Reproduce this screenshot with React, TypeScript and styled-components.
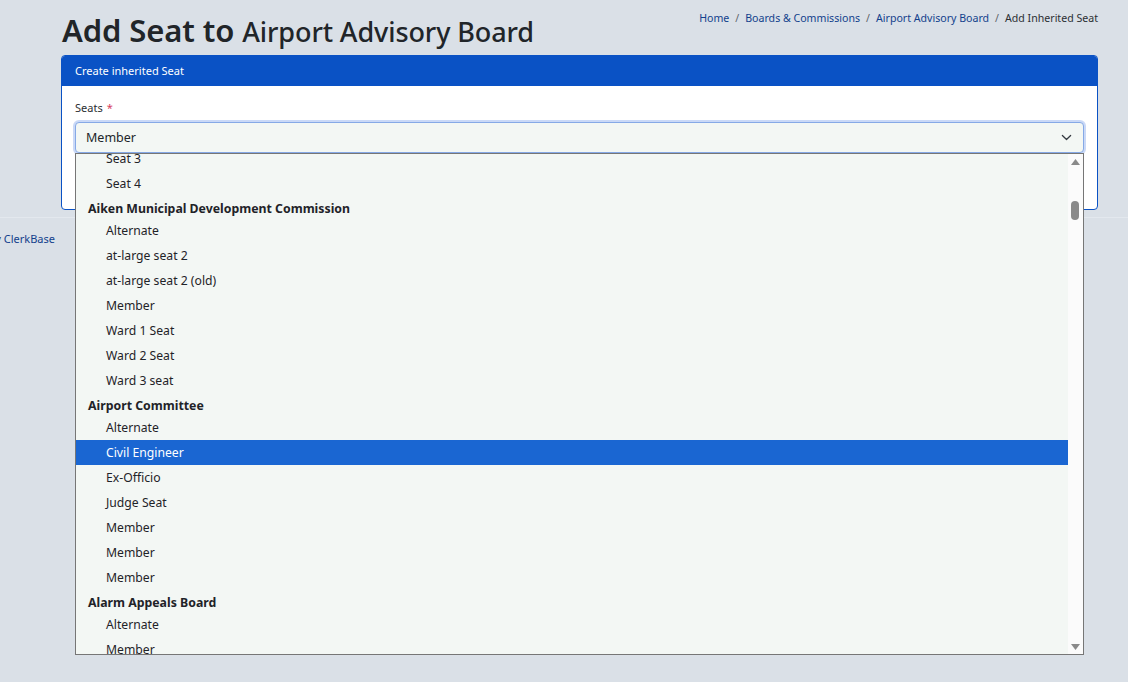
import * as React from "react";
import styled, { createGlobalStyle } from "styled-components";

const GlobalStyle = createGlobalStyle`
  html, body {
    margin: 0;
    padding: 0;
    background: #dae0e7;
    font-family: "Noto Sans", "Open Sans", sans-serif;
    color: #212529;
    overflow: hidden;
  }
`;

const Page = styled.div`
  width: 1128px;
  height: 682px;
  display: flex;
  flex-direction: column;
`;

const Main = styled.div`
  padding: 0 30px 0 61px;
  display: flex;
  flex-direction: column;
`;

const TopRow = styled.div`
  display: flex;
  justify-content: space-between;
  align-items: flex-start;
  height: 55px;
`;

const Title = styled.h1`
  margin: 8px 0 0 1px;
  font-weight: 600;
  font-size: 31px;
  line-height: 44px;
  letter-spacing: -0.1px;
  white-space: nowrap;
`;

const TitleName = styled.span`
  font-size: 27px;
  font-weight: 500;
`;

const Crumbs = styled.ol`
  list-style: none;
  margin: 10px 0 0;
  padding: 0;
  display: flex;
  font-size: 10.6px;
  line-height: 16px;
`;

const Crumb = styled.li<{ $active?: boolean }>`
  color: ${p => (p.$active ? "#2b2f33" : "#123f8c")};
  &:not(:first-child)::before {
    content: "/";
    color: #5d636a;
    padding: 0 6px;
  }
`;

const Card = styled.div`
  border: 1px solid #0a52c5;
  border-radius: 4px;
  background: #fff;
  width: 1035px;
`;

const CardHeader = styled.div`
  background: #0a52c5;
  color: #fff;
  font-size: 11px;
  line-height: 16px;
  padding: 7px 13px;
  border-radius: 3px 3px 0 0;
`;

const CardBody = styled.div`
  padding: 14px 13px 56px;
`;

const Label = styled.div`
  font-size: 11px;
  line-height: 16px;
  margin-bottom: 6px;
  color: #2b2f33;
`;

const Required = styled.span`
  color: #d63d5e;
  margin-left: 4px;
`;

const SelectWrap = styled.div`
  position: relative;
`;

const SelectBox = styled.div`
  height: 31px;
  box-sizing: border-box;
  border: 1px solid #86a9e6;
  border-radius: 4px;
  box-shadow: 0 0 0 2px rgba(80, 130, 230, 0.3);
  background: #f3f7f4;
  display: flex;
  align-items: center;
  justify-content: space-between;
  padding: 0 11px 0 10px;
  font-size: 12.5px;
  color: #212529;
`;

const ListBox = styled.div`
  position: absolute;
  top: 100%;
  left: 0;
  right: 0;
  height: 502px;
  box-sizing: border-box;
  border: 1px solid #767676;
  background: #f3f7f4;
  display: flex;
  overflow: hidden;
  z-index: 10;
`;

const Options = styled.div`
  flex: 1;
  margin-top: -8px;
`;

const Group = styled.div`
  height: 22px;
  line-height: 25px;
  padding-left: 12px;
  font-size: 12.3px;
  font-weight: 700;
  color: #1f2328;
`;

const Option = styled.div<{ $selected?: boolean }>`
  height: 25px;
  line-height: 25px;
  padding-left: 30px;
  font-size: 12.2px;
  color: ${p => (p.$selected ? "#fff" : "#1f2328")};
  background: ${p => (p.$selected ? "#1a66d2" : "transparent")};
`;

const Scrollbar = styled.div`
  width: 15px;
  background: #fbfbfb;
  display: flex;
  flex-direction: column;
  align-items: center;
  justify-content: space-between;
  position: relative;
  padding: 5px 0 4px;
  box-sizing: border-box;
`;

const Thumb = styled.div`
  position: absolute;
  top: 47px;
  left: 3px;
  width: 8px;
  height: 19px;
  border-radius: 4px;
  background: #8a8a8a;
`;

const Footer = styled.div`
  margin-top: 7px;
  border-top: 1px solid #e3e8ee;
  height: 40px;
  display: flex;
  align-items: center;
`;

const FooterText = styled.div`
  width: 55px;
  display: flex;
  justify-content: flex-end;
  font-size: 11px;
  white-space: nowrap;
  color: #2b2f33;
  span {
    flex-shrink: 0;
  }
  a {
    color: #123f8c;
    text-decoration: none;
  }
`;

type Item = { label: string; group?: boolean; selected?: boolean };

const items: Item[] = [
  { label: "Seat 3" },
  { label: "Seat 4" },
  { label: "Aiken Municipal Development Commission", group: true },
  { label: "Alternate" },
  { label: "at-large seat 2" },
  { label: "at-large seat 2 (old)" },
  { label: "Member" },
  { label: "Ward 1 Seat" },
  { label: "Ward 2 Seat" },
  { label: "Ward 3 seat" },
  { label: "Airport Committee", group: true },
  { label: "Alternate" },
  { label: "Civil Engineer", selected: true },
  { label: "Ex-Officio" },
  { label: "Judge Seat" },
  { label: "Member" },
  { label: "Member" },
  { label: "Member" },
  { label: "Alarm Appeals Board", group: true },
  { label: "Alternate" },
  { label: "Member" },
  { label: "Seat 1" },
];

const Chevron = () => (
  <svg width="11" height="11" viewBox="0 0 16 16">
    <path d="M2 5l6 6 6-6" fill="none" stroke="#343a40" strokeWidth="1.8" strokeLinecap="round" strokeLinejoin="round" />
  </svg>
);

const Arrow = ({ down }: { down?: boolean }) => (
  <svg width="9" height="6" viewBox="0 0 9 6">
    <path d={down ? "M0 0h9L4.5 6z" : "M0 6h9L4.5 0z"} fill="#8a8a8a" />
  </svg>
);

export default function App() {
  return (
    <Page>
      <GlobalStyle />
      <Main>
        <TopRow>
          <Title>
            Add Seat to <TitleName>Airport Advisory Board</TitleName>
          </Title>
          <Crumbs>
            <Crumb>Home</Crumb>
            <Crumb>Boards &amp; Commissions</Crumb>
            <Crumb>Airport Advisory Board</Crumb>
            <Crumb $active>Add Inherited Seat</Crumb>
          </Crumbs>
        </TopRow>
        <Card>
          <CardHeader>Create inherited Seat</CardHeader>
          <CardBody>
            <Label>
              Seats<Required>*</Required>
            </Label>
            <SelectWrap>
              <SelectBox>
                Member
                <Chevron />
              </SelectBox>
              <ListBox>
                <Options>
                  {items.map((it, i) =>
                    it.group ? (
                      <Group key={i}>{it.label}</Group>
                    ) : (
                      <Option key={i} $selected={it.selected}>
                        {it.label}
                      </Option>
                    )
                  )}
                </Options>
                <Scrollbar>
                  <Arrow />
                  <Thumb />
                  <Arrow down />
                </Scrollbar>
              </ListBox>
            </SelectWrap>
          </CardBody>
        </Card>
      </Main>
      <Footer>
        <FooterText>
          <span>
            Powered by <a href="#">ClerkBase</a>
          </span>
        </FooterText>
      </Footer>
    </Page>
  );
}
